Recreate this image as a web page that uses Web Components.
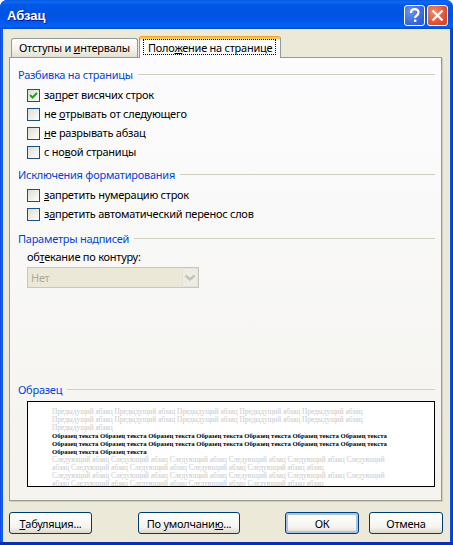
<!DOCTYPE html>
<html lang="ru">
<head>
<meta charset="utf-8">
<title>Абзац</title>
<style>
  html, body { margin: 0; padding: 0; background: #fff; }
  body { font: 11px "Noto Sans", Tahoma, sans-serif; letter-spacing: -.25px; color: #000; }
</style>
</head>
<body>
<xp-window caption="Абзац">
  <xp-tabs>
    <xp-tab slot="tabs">Отступы и <u>и</u>нтервалы</xp-tab>
    <xp-tab slot="tabs" active>Поло<u>ж</u>ение на странице</xp-tab>

    <xp-section heading="Разбивка на страницы" style="--top:8px">
      <xp-check checked>за<u>п</u>рет висячих строк</xp-check>
      <xp-check>не <u>о</u>трывать от следующего</xp-check>
      <xp-check><u>н</u>е разрывать абзац</xp-check>
      <xp-check>с но<u>в</u>ой страницы</xp-check>
    </xp-section>
    <xp-section heading="Исключения форматирования" style="--top:4px">
      <xp-check><u>з</u>апретить нумерацию строк</xp-check>
      <xp-check>з<u>а</u>претить автоматический перенос слов</xp-check>
    </xp-section>
    <xp-section heading="Параметры надписей" style="--top:6px">
      <xp-combo value="Нет">об<u>т</u>екание по контуру:</xp-combo>
    </xp-section>
    <xp-section heading="Образец" style="--top:93px">
      <xp-preview></xp-preview>
    </xp-section>
  </xp-tabs>
  <xp-button slot="actions" style="--w:83px"><u>Т</u>абуляция...</xp-button>
  <xp-button slot="actions" style="--w:102px;--ml:46px">По умолчани<u>ю</u>...</xp-button>
  <xp-button slot="actions" default style="--w:74px;--ml:45px">ОК</xp-button>
  <xp-button slot="actions" style="--w:74px;--ml:10px">Отмена</xp-button>
</xp-window>

<script>
// window frame with Luna title bar
class XpWindow extends HTMLElement {
  constructor() {
    super();
    this.attachShadow({ mode: 'open' });
    this.shadowRoot.innerHTML = `
      <style>
        :host { display: flex; flex-direction: column; width: 453px; height: 545px; box-sizing: border-box;
          background: linear-gradient(90deg, #0831d9 0, #166aee 1px, #0855dd 3px, #0855dd 450px, #0831d9 453px);
          border-radius: 7px 7px 0 0; overflow: hidden; }
        .bar { height: 29px; flex: none; display: flex; align-items: center; padding: 2px 5px 0 7px; box-sizing: border-box; gap: 2px;
          background: linear-gradient(#0a5be0 0, #0a6af5 2px, #0058e6 5px, #0053e1 14px, #0058ee 22px, #0664f4 26px, #0048d0 29px); }
        .cap { flex: 1; color: #fff; font: bold 13px "Liberation Sans", sans-serif; letter-spacing: 0; text-shadow: 1px 1px 0 #0f1089; }
        .cbtn { width: 21px; height: 21px; box-sizing: border-box; border: 1px solid #fff; border-radius: 3px;
          display: block; }
        .help { background: radial-gradient(circle at 30% 30%, #6b93f0, #2f5fdc 75%); }
        .close { background: radial-gradient(circle at 30% 30%, #ee8a68, #d8482a 75%); }
        .client { flex: 1; margin: 0 3px 3px; background: #ece9d8; display: flex; flex-direction: column; padding: 7px 8px 8px 6px; min-height: 0; }
        .actions { display: flex; margin-top: 11px; }
        .edge { height: 3px; background: #0a2fb6; margin-top: -3px; flex: none; }
      </style>
      <div class="bar">
        <span class="cap"></span>
        <svg class="cbtn help" viewBox="0 0 19 19"><path d="M6 7c0-5 7.500-5 7.500-.5 0 3-3.500 3-3.500 5.500" fill="none" stroke="#fff" stroke-width="2.200"/><rect x="9" y="13.500" width="2.300" height="2.500" fill="#fff"/></svg>
        <svg class="cbtn close" viewBox="0 0 19 19"><path d="M4.500 4.500l10 10M14.500 4.500l-10 10" fill="none" stroke="#fff" stroke-width="2.400"/></svg>
      </div>
      <div class="client">
        <slot></slot>
        <div class="actions"><slot name="actions"></slot></div>
      </div>
      <div class="edge"></div>`;
    this.shadowRoot.querySelector('.cap').textContent = this.getAttribute('caption');
  }
}

// tab strip and the panel under it
class XpTabs extends HTMLElement {
  constructor() {
    super();
    this.attachShadow({ mode: 'open' });
    this.shadowRoot.innerHTML = `
      <style>
        :host { display: flex; flex-direction: column; height: 465px; flex: none; }
        .strip { display: flex; height: 22px; align-items: flex-end; padding-left: 2px; gap: 1px; position: relative; z-index: 1; margin-bottom: -1px; flex: none; }
        .panel { flex: 1; min-height: 0; border: 1px solid #919b9c; border-right-color: #9b9b93; border-bottom-color: #9b9b93; box-shadow: 1px 1px 0 #d0cdbc;
          background: linear-gradient(#fcfcfe, #f4f3ee); padding: 0 6px 0 8px; display: flex; flex-direction: column; }
      </style>
      <div class="strip"><slot name="tabs"></slot></div>
      <div class="panel"><slot></slot></div>`;
  }
}

class XpTab extends HTMLElement {
  constructor() {
    super();
    this.attachShadow({ mode: 'open' });
    this.shadowRoot.innerHTML = `
      <style>
        :host { display: block; box-sizing: border-box; height: 19px; width: 127px; margin-bottom: 1px; padding: 0 7px; white-space: nowrap;
          border: 1px solid #919b9c; border-bottom: 0; border-radius: 3px 3px 0 0;
          background: linear-gradient(#fff, #f3f2ea 60%, #e2e0d2); }
        :host([active]) { height: 22px; width: 142px; margin-bottom: 0; padding: 2px 4px 0 3px; background: #fcfcfe;
          border-color: #e8a33c #919b9c transparent; box-shadow: inset 0 2px 0 #ffc73c; }
        .focus { display: block; height: 16px; line-height: 18px; }
        :host([active]) .focus { padding: 0 5px; line-height: 17px; outline: 1px dotted #000; outline-offset: -1px; }
      </style>
      <span class="focus"><slot></slot></span>`;
  }
}

// blue group heading with a rule running to the right
class XpSection extends HTMLElement {
  constructor() {
    super();
    this.attachShadow({ mode: 'open' });
    this.shadowRoot.innerHTML = `
      <style>
        :host { display: block; margin-top: var(--top, 7px); }
        .head { display: flex; align-items: center; gap: 5px; height: 16px; color: #0046d5; margin-bottom: 4px; }
        .head i { flex: 1; height: 1px; background: #d0d0bf; }
        .body { padding-left: 9px; }
      </style>
      <div class="head"><span></span><i></i></div>
      <div class="body"><slot></slot></div>`;
    this.shadowRoot.querySelector('span').textContent = this.getAttribute('heading');
  }
}

class XpCheck extends HTMLElement {
  constructor() {
    super();
    this.attachShadow({ mode: 'open' });
    this.shadowRoot.innerHTML = `
      <style>
        :host { display: flex; align-items: center; gap: 4px; height: 19px; white-space: nowrap; }
        .box { width: 13px; height: 13px; box-sizing: border-box; border: 1px solid #1c5180; flex: none;
          background: linear-gradient(135deg, #dcdcd7, #f5f4ef 70%, #fff); display: block; }
        span { margin-bottom: 2px; }
      </style>
      <svg class="box" viewBox="0 0 11 11"></svg>
      <span><slot></slot></span>`;
    if (this.hasAttribute('checked')) {
      this.shadowRoot.querySelector('svg').innerHTML = '<path d="M2 5l2.500 2.500L9 3" fill="none" stroke="#21a121" stroke-width="2"/>';
    }
  }
}

// disabled combo box with its label above
class XpCombo extends HTMLElement {
  constructor() {
    super();
    this.attachShadow({ mode: 'open' });
    this.shadowRoot.innerHTML = `
      <style>
        :host { display: block; }
        .label { height: 16px; line-height: 14px; white-space: nowrap; }
        .field { width: 172px; height: 21px; box-sizing: border-box; border: 1px solid #c9c7ba; background: #ebe8d8; color: #aca899;
          display: flex; align-items: center; justify-content: space-between; padding: 0 0 0 3px; margin-top: 1px; }
        .arrow { width: 16px; height: 19px; border-radius: 2px; background: #eeede5; border: 1px solid #e4e2d8; box-sizing: border-box; display: block; }
      </style>
      <div class="label"><slot></slot></div>
      <div class="field"><span></span>
        <svg class="arrow" viewBox="0 0 14 17"><path d="M2.500 6.500L7 10.500l4.500-4" fill="none" stroke="#c4c2b6" stroke-width="2.400"/></svg>
      </div>`;
    this.shadowRoot.querySelector('span').textContent = this.getAttribute('value');
  }
}

// sample paragraph box, text is fixed like in Word
class XpPreview extends HTMLElement {
  constructor() {
    super();
    this.attachShadow({ mode: 'open' });
    const prev = 'Предыдущий абзац ';
    const sample = 'Образец текста ';
    const next = 'Следующий абзац ';
    this.shadowRoot.innerHTML = `
      <style>
        :host { display: block; height: 86px; width: 408px; margin-top: 2px; box-sizing: border-box; border: 1px solid #000; background: #fff; overflow: hidden;
          font: 7.350px/8px "Liberation Serif", serif; letter-spacing: 0; padding: 6px 0 0 24px; color: #c8c8c8; }
        div { white-space: nowrap; height: 8px; }
        b { color: #000; font-size: 6.700px; }
      </style>
      <div>${prev.repeat(5)}</div>
      <div>${prev.repeat(5)}</div>
      <div>${prev}</div>
      <div><b>${sample.repeat(7)}</b></div>
      <div><b>${sample.repeat(7)}</b></div>
      <div><b>${sample.repeat(2)}</b></div>
      <div>${next.repeat(5)}Следующий</div>
      <div>абзац ${next.repeat(4)}абзац</div>
      <div>${next.repeat(5)}Следующий</div>
      <div>абзац ${next.repeat(4)}абзац</div>`;
  }
}

class XpButton extends HTMLElement {
  constructor() {
    super();
    this.attachShadow({ mode: 'open' });
    this.shadowRoot.innerHTML = `
      <style>
        :host { display: flex; align-items: center; justify-content: center; box-sizing: border-box; flex: none; width: var(--w); margin-left: var(--ml, 0); height: 22px;
          border: 1px solid #003c74; border-radius: 3px; background: linear-gradient(#fff, #f5f4ee 70%, #dcd8cc); white-space: nowrap; }
        :host([default]) { box-shadow: inset 0 0 0 2px #a9c2ec; }
      </style>
      <slot></slot>`;
  }
}

customElements.define('xp-window', XpWindow);
customElements.define('xp-tabs', XpTabs);
customElements.define('xp-tab', XpTab);
customElements.define('xp-section', XpSection);
customElements.define('xp-check', XpCheck);
customElements.define('xp-combo', XpCombo);
customElements.define('xp-preview', XpPreview);
customElements.define('xp-button', XpButton);
</script>
</body>
</html>
